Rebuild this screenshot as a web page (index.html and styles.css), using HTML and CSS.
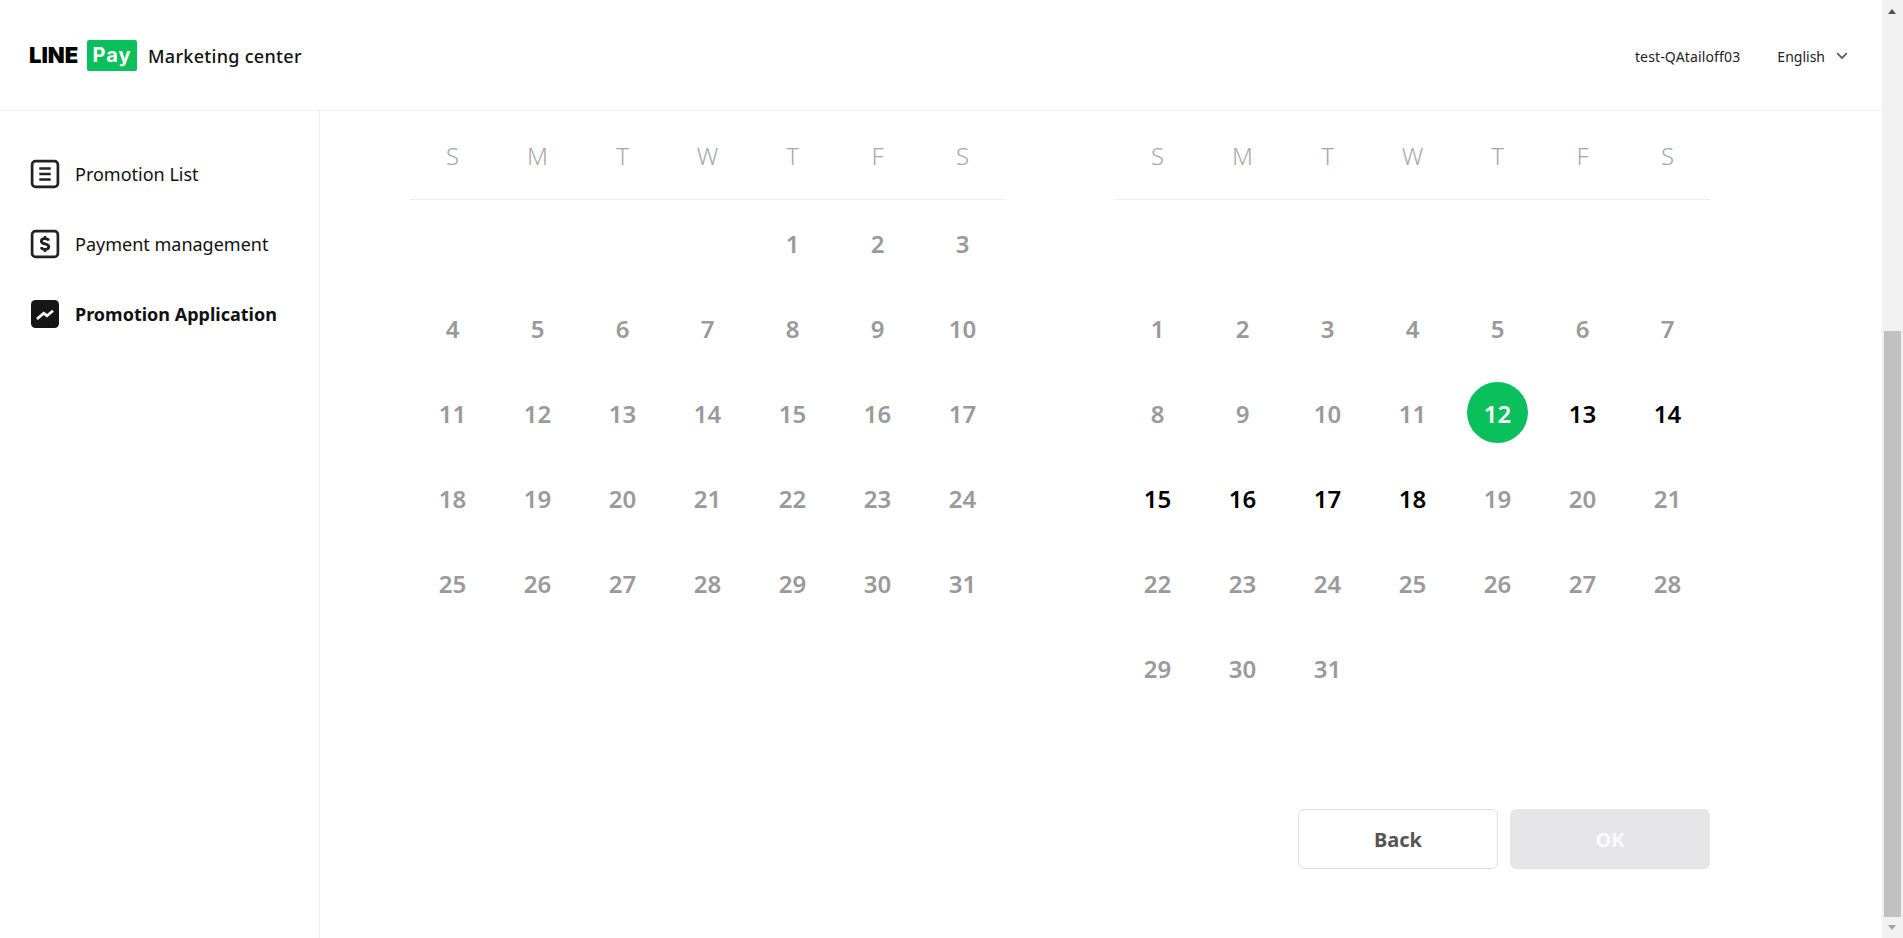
FILE: index.html
```html
<!DOCTYPE html>
<html lang="en">
<head>
  <meta charset="UTF-8">
  <meta name="viewport" content="width=device-width, initial-scale=1.0">
  <title>Marketing center</title>
  <link rel="stylesheet" href="styles.css">
</head>
<body>
  <div class="page">
    <header class="header">
      <div class="brand">
        <span class="logo-line">LINE</span>
        <span class="logo-pay">Pay</span>
        <span class="brand-name">Marketing center</span>
      </div>
      <div class="account">
        <span class="account-name">test-QAtailoff03</span>
        <span class="lang">English
          <svg class="chevron" width="12" height="8" viewBox="0 0 12 8"><path d="M1.2 1.2 6 6l4.8-4.8" fill="none" stroke="#555" stroke-width="1.7"/></svg>
        </span>
      </div>
    </header>
    <div class="body-row">
      <nav class="sidebar">
        <a class="nav-item">
          <svg class="nav-icon" width="30" height="30" viewBox="0 0 30 30"><rect x="2.100" y="2.100" width="25.800" height="25.800" rx="3.500" fill="none" stroke="#222" stroke-width="2.700"/><path d="M9.300 9.500h11.400M9.300 15h11.400M9.300 20.500h11.400" stroke="#222" stroke-width="2.400"/></svg>
          Promotion List
        </a>
        <a class="nav-item">
          <svg class="nav-icon" width="30" height="30" viewBox="0 0 30 30"><rect x="2.100" y="2.100" width="25.800" height="25.800" rx="3.500" fill="none" stroke="#222" stroke-width="2.700"/><path d="M18.700 11.600c-.4-1.300-1.800-2-3.700-2-2.200 0-3.700 1-3.700 2.600 0 3.600 7.500 1.900 7.500 5.500 0 1.700-1.600 2.700-3.800 2.700-2 0-3.400-.8-3.900-2.300" fill="none" stroke="#222" stroke-width="2.800"/><path d="M15 7v2.600M15 20.400V23" stroke="#222" stroke-width="2.400"/></svg>
          Payment management
        </a>
        <a class="nav-item active">
          <svg class="nav-icon" width="30" height="30" viewBox="0 0 30 30"><rect x="1" y="1" width="28" height="28" rx="4.500" fill="#161616"/><path d="M7 20l6.700-5.700 3.300 2.400 6-5" fill="none" stroke="#fff" stroke-width="2.700"/></svg>
          Promotion Application
        </a>
      </nav>
      <main class="content">
        <div class="calendars">
          <section class="calendar">
            <div class="weekdays"><span>S</span><span>M</span><span>T</span><span>W</span><span>T</span><span>F</span><span>S</span></div>
            <div class="days">
              <span></span><span></span><span></span><span></span><span>1</span><span>2</span><span>3</span>
              <span>4</span><span>5</span><span>6</span><span>7</span><span>8</span><span>9</span><span>10</span>
              <span>11</span><span>12</span><span>13</span><span>14</span><span>15</span><span>16</span><span>17</span>
              <span>18</span><span>19</span><span>20</span><span>21</span><span>22</span><span>23</span><span>24</span>
              <span>25</span><span>26</span><span>27</span><span>28</span><span>29</span><span>30</span><span>31</span>
            </div>
          </section>
          <section class="calendar">
            <div class="weekdays"><span>S</span><span>M</span><span>T</span><span>W</span><span>T</span><span>F</span><span>S</span></div>
            <div class="days">
              <span></span><span></span><span></span><span></span><span></span><span></span><span></span>
              <span>1</span><span>2</span><span>3</span><span>4</span><span>5</span><span>6</span><span>7</span>
              <span>8</span><span>9</span><span>10</span><span>11</span><span class="selected"><b>12</b></span><span class="open">13</span><span class="open">14</span>
              <span class="open">15</span><span class="open">16</span><span class="open">17</span><span class="open">18</span><span>19</span><span>20</span><span>21</span>
              <span>22</span><span>23</span><span>24</span><span>25</span><span>26</span><span>27</span><span>28</span>
              <span>29</span><span>30</span><span>31</span><span></span><span></span><span></span><span></span>
            </div>
          </section>
        </div>
        <div class="actions">
          <button class="btn btn-back" type="button">Back</button>
          <button class="btn btn-ok" type="button" disabled>OK</button>
        </div>
      </main>
    </div>
  </div>
  <div class="scrollbar">
    <span class="arrow arrow-up"></span>
    <span class="thumb"></span>
    <span class="arrow arrow-down"></span>
  </div>
</body>
</html>
```

FILE: styles.css
```css
* {
  box-sizing: border-box;
}
html, body {
  height: 100%;
}
body {
  margin: 0;
  display: flex;
  overflow: hidden;
  background: #fff;
  color: #111;
  font-family: "Noto Sans", Arial, sans-serif;
}
.page {
  flex: 1;
  display: flex;
  flex-direction: column;
  min-width: 0;
}
.header {
  height: 111px;
  flex: none;
  display: flex;
  align-items: center;
  justify-content: space-between;
  padding: 0 34px 0 29px;
  border-bottom: 1px solid #eee;
}
.brand {
  display: flex;
  align-items: center;
}
.logo-line {
  font-family: Inter, Arial, sans-serif;
  font-size: 22px;
  font-weight: 900;
  color: #000;
  width: 58px;
}
.logo-pay {
  width: 50px;
  height: 31px;
  display: flex;
  align-items: center;
  justify-content: center;
  background: #0ac05c;
  border-radius: 2px;
  color: #fff;
  font-family: Inter, Arial, sans-serif;
  font-size: 20px;
  font-weight: 700;
  letter-spacing: 1px;
}
.brand-name {
  margin: 2px 0 0 11px;
  font-size: 18px;
  font-weight: 500;
  letter-spacing: 0.3px;
}
.account {
  display: flex;
  align-items: center;
  padding-top: 2px;
  font-size: 14px;
  color: #222;
}
.account-name {
  letter-spacing: 0.15px;
}
.lang {
  display: flex;
  align-items: center;
  margin-left: 37px;
}
.chevron {
  margin-left: 11px;
}
.body-row {
  flex: 1;
  display: flex;
  min-height: 0;
}
.sidebar {
  width: 320px;
  flex: none;
  padding-top: 28px;
  border-right: 1px solid #eee;
}
.nav-item {
  height: 70px;
  display: flex;
  align-items: center;
  padding-left: 30px;
  font-size: 18px;
  color: #111;
}
.nav-item.active {
  font-weight: 700;
}
.nav-icon {
  margin-right: 15px;
}
.content {
  flex: 1;
  padding-left: 90px;
}
.calendars {
  display: flex;
  gap: 110px;
}
.calendar {
  width: 595px;
}
.weekdays {
  height: 89px;
  display: grid;
  grid-template-columns: repeat(7, 85px);
  align-items: center;
  border-bottom: 1px solid #eee;
  font-size: 24px;
  font-weight: 300;
  color: #a8a8a8;
  text-align: center;
}
.days {
  display: grid;
  grid-template-columns: repeat(7, 85px);
  grid-auto-rows: 85px;
  font-size: 24px;
  font-weight: 600;
  color: #9a9a9a;
}
.days span {
  display: flex;
  align-items: center;
  justify-content: center;
  padding-top: 2px;
}
.days .open {
  color: #000;
}
.days .selected {
  padding-top: 0;
}
.days .selected b {
  width: 61px;
  height: 61px;
  display: flex;
  align-items: center;
  justify-content: center;
  padding-top: 2px;
  border-radius: 50%;
  background: #0ac05c;
  color: #fff;
  font-weight: 600;
}
.actions {
  display: flex;
  justify-content: flex-end;
  gap: 12px;
  width: 1300px;
  margin-top: 99px;
}
.btn {
  width: 200px;
  height: 60px;
  border-radius: 6px;
  font-family: inherit;
  font-size: 20px;
  font-weight: 700;
}
.btn-back {
  background: #fff;
  border: 1px solid #dfdfdf;
  color: #555;
}
.btn-ok {
  background: #e6e6e8;
  border: none;
  color: #fafafa;
}
.scrollbar {
  width: 21px;
  flex: none;
  display: flex;
  flex-direction: column;
  align-items: center;
  background: #f1f1f1;
}
.arrow {
  height: 21px;
  width: 21px;
  flex: none;
  position: relative;
}
.arrow::after {
  content: "";
  position: absolute;
  left: 6px;
  border-left: 4.5px solid transparent;
  border-right: 4.5px solid transparent;
}
.arrow-up::after {
  top: 9px;
  border-bottom: 5px solid #505050;
}
.arrow-down::after {
  top: 8px;
  border-top: 5px solid #a3a3a3;
}
.thumb {
  width: 17px;
  flex: 1;
  margin-top: 310px;
  background: #c1c1c1;
}
```
